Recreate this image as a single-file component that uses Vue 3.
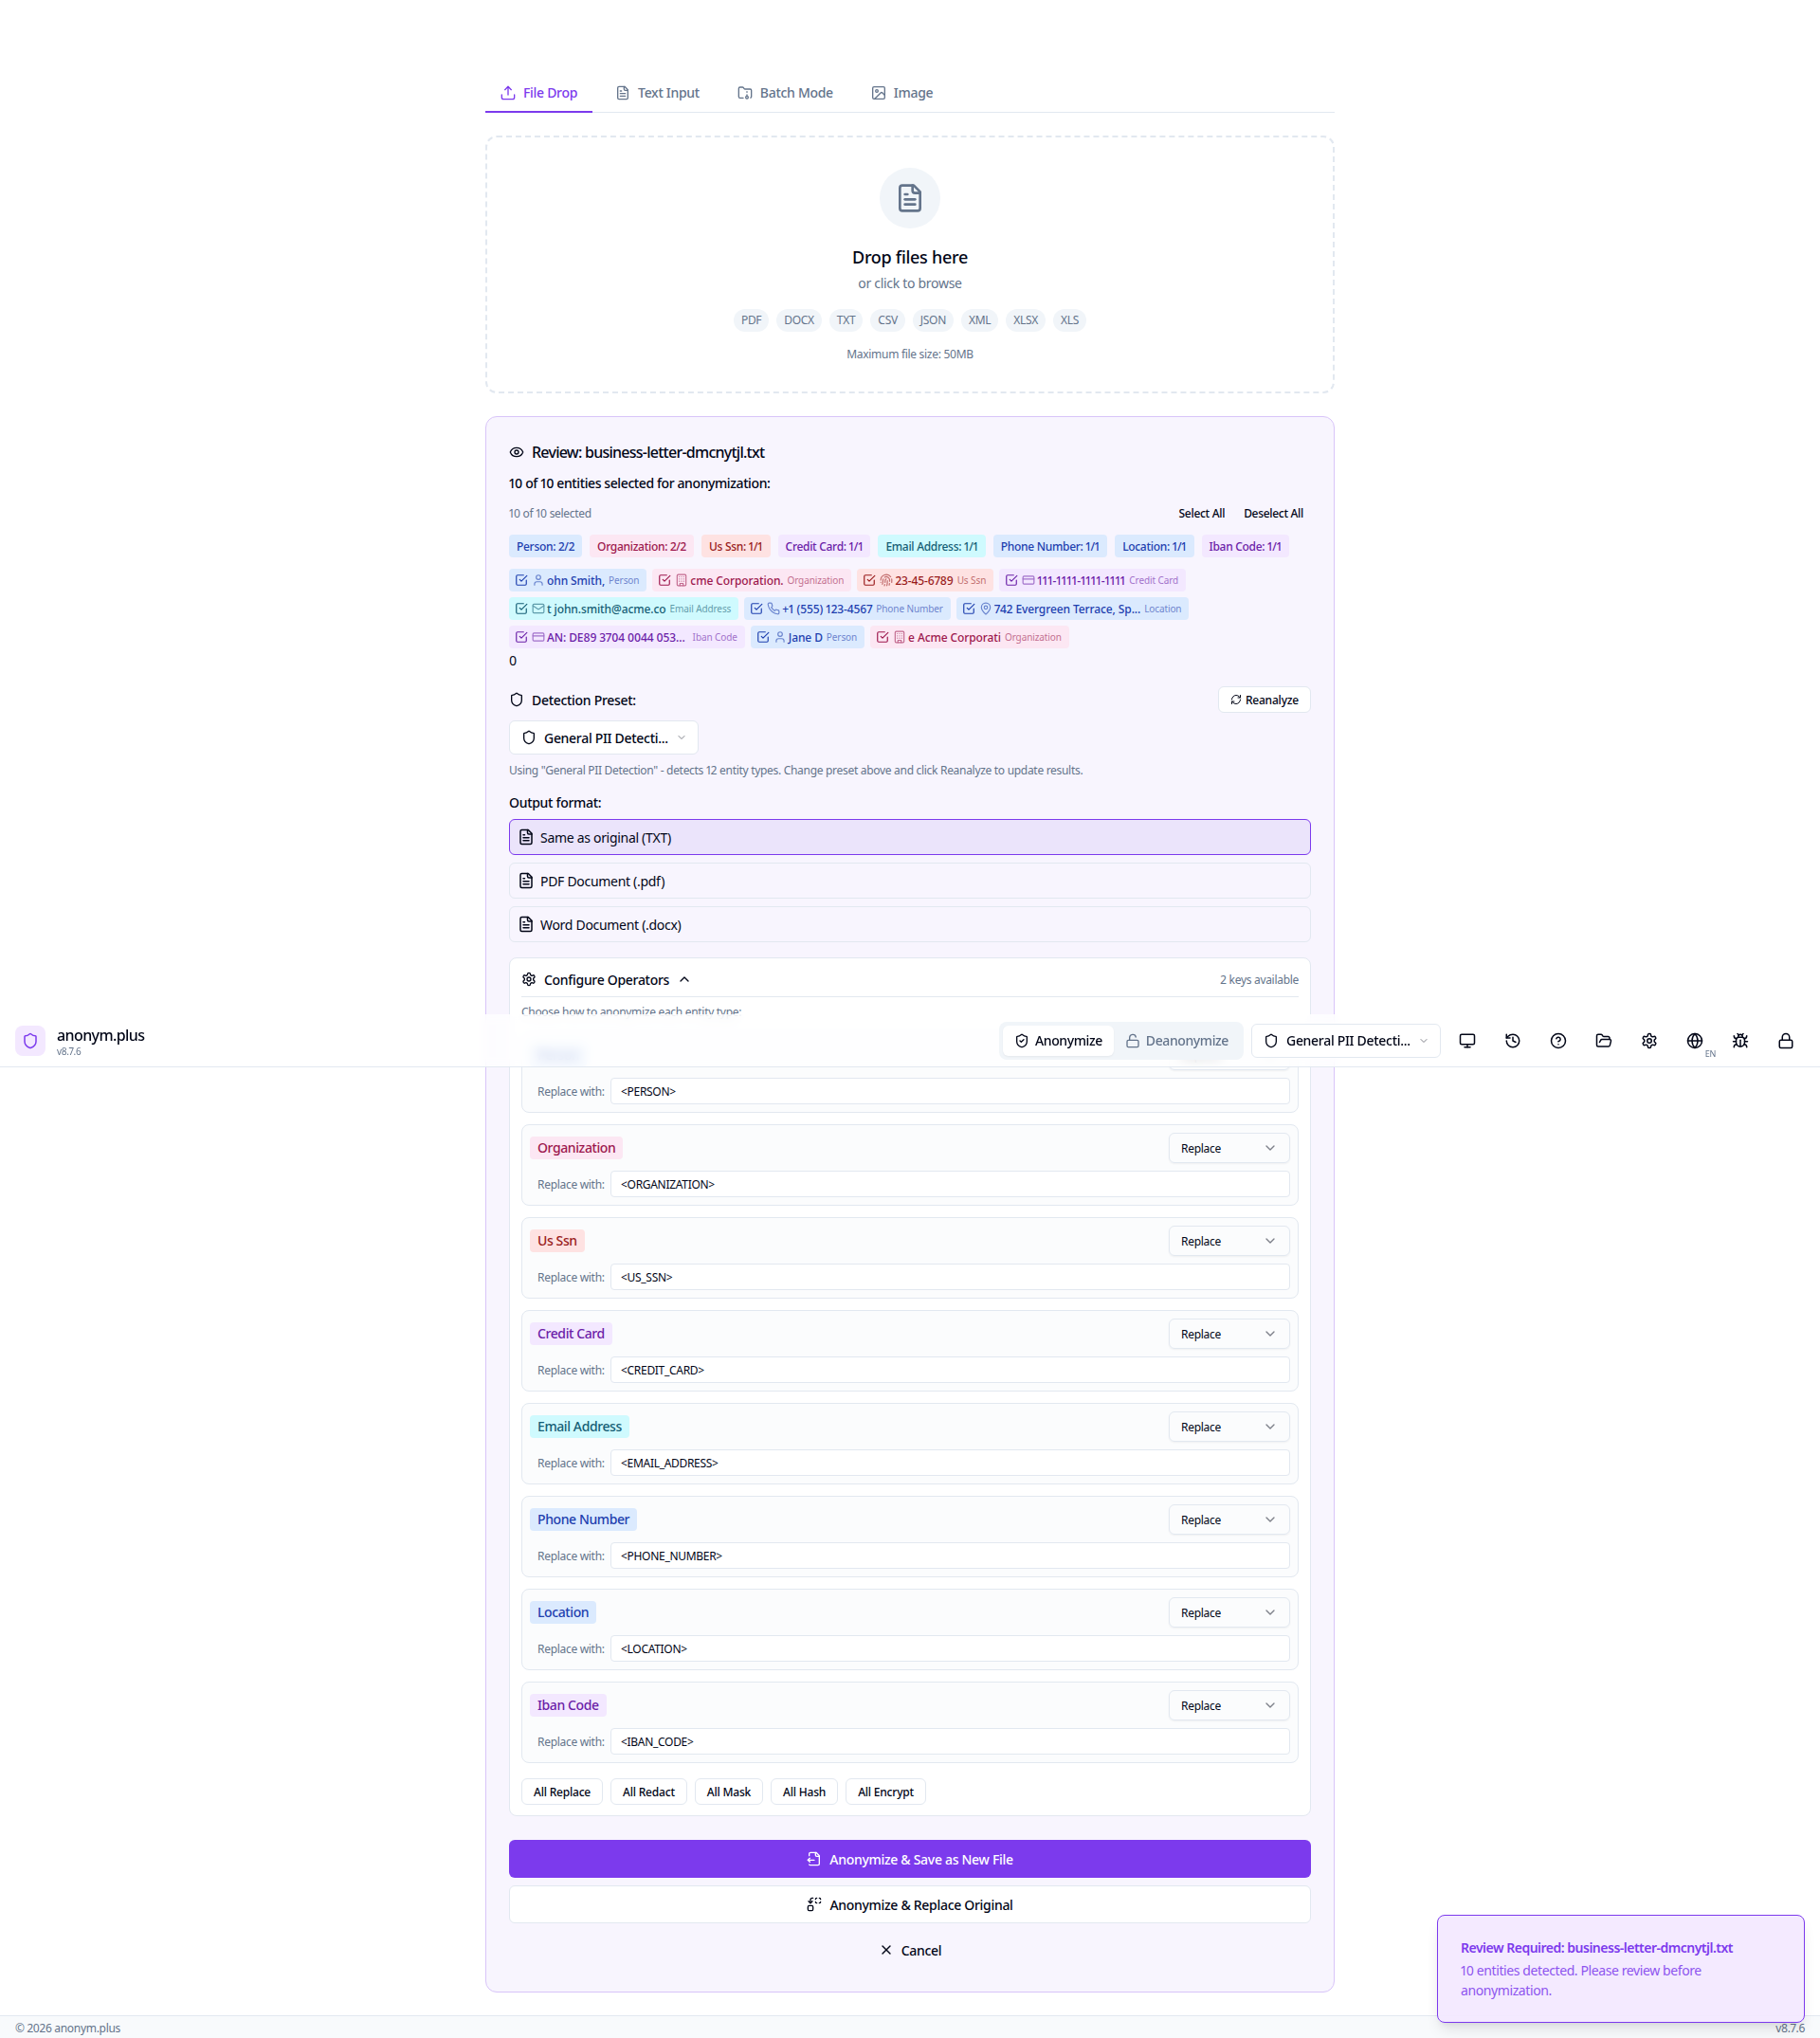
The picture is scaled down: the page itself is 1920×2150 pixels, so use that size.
<template>
  <div class="page">
    <main class="main">
      <!-- tabs -->
      <div class="tabs">
        <button v-for="t in tabs" :key="t.label" class="tab" :class="{ active: t.active }">
          <Icon :name="t.icon" :size="16" />
          {{ t.label }}
        </button>
      </div>

      <!-- drop zone -->
      <div class="dropzone">
        <div class="drop-circle"><Icon name="file" :size="32" /></div>
        <h3 class="drop-title">Drop files here</h3>
        <p class="drop-sub">or click to browse</p>
        <div class="formats">
          <span v-for="f in formats" :key="f" class="format">{{ f }}</span>
        </div>
        <p class="drop-max">Maximum file size: 50MB</p>
      </div>

      <!-- review panel -->
      <section class="review">
        <h2 class="review-title"><Icon name="eye" :size="16" />Review: business-letter-dmcnytjl.txt</h2>
        <p class="review-count">10 of 10 entities selected for anonymization:</p>
        <div class="select-row">
          <span class="muted-12">10 of 10 selected</span>
          <div class="select-actions">
            <button class="link-btn">Select All</button>
            <button class="link-btn">Deselect All</button>
          </div>
        </div>

        <div class="stats">
          <span v-for="s in stats" :key="s.label" class="stat" :class="s.color">{{ s.label }}</span>
        </div>

        <div class="entities">
          <span v-for="e in entities" :key="e.text" class="entity" :class="e.color">
            <Icon name="check" :size="14" class="entity-check" />
            <Icon :name="e.icon" :size="14" class="entity-icon" />
            <span class="entity-text">{{ e.text }}</span>
            <span class="entity-label" :class="{ wide: e.wide }">{{ e.label }}</span>
          </span>
        </div>
        <div class="zero">0</div>

        <div class="preset-row">
          <span class="label-14"><Icon name="shield" :size="16" />Detection Preset:</span>
          <button class="small-btn reanalyze"><Icon name="refresh" :size="12" />Reanalyze</button>
        </div>
        <button class="preset-select">
          <Icon name="shield" :size="16" />
          <span class="preset-text">General PII Detecti...</span>
          <Icon name="chevronDown" :size="12" class="chev-muted" />
        </button>
        <p class="preset-help">Using "General PII Detection" - detects 12 entity types. Change preset above and click Reanalyze to update results.</p>

        <p class="output-title">Output format:</p>
        <div class="outputs">
          <div v-for="o in outputs" :key="o.label" class="output" :class="{ active: o.active }">
            <Icon name="file" :size="18" />
            {{ o.label }}
          </div>
        </div>

        <!-- operators -->
        <div class="config">
          <div class="config-head">
            <span class="config-title"><Icon name="settings" :size="16" />Configure Operators<Icon name="chevronUp" :size="16" class="config-chev" /></span>
            <span class="muted-12">2 keys available</span>
          </div>
          <p class="config-help">Choose how to anonymize each entity type:</p>
          <div class="ops">
            <div v-for="op in operators" :key="op.name" class="op">
              <div class="op-top">
                <span class="op-badge" :class="op.color">{{ op.name }}</span>
                <button class="op-select">Replace<Icon name="chevronDown" :size="16" class="chev-muted" /></button>
              </div>
              <div class="op-bottom">
                <span class="op-label">Replace with:</span>
                <input class="op-input" :value="op.value" />
              </div>
            </div>
          </div>
          <div class="all-row">
            <button v-for="a in allActions" :key="a" class="small-btn">{{ a }}</button>
          </div>
        </div>

        <button class="action primary"><Icon name="fileOutput" :size="16" />Anonymize &amp; Save as New File</button>
        <button class="action outline"><Icon name="replace" :size="16" />Anonymize &amp; Replace Original</button>
        <button class="action ghost"><Icon name="x" :size="16" />Cancel</button>
      </section>
    </main>

    <footer class="footer">
      <span>© 2026 anonym.plus</span>
      <span>v8.7.6</span>
    </footer>

    <!-- sticky header, caught mid page by the capture -->
    <header class="header">
      <div class="brand">
        <div class="logo"><Icon name="shield" :size="18" /></div>
        <div>
          <div class="brand-name">anonym.plus</div>
          <div class="brand-version">v8.7.6</div>
        </div>
      </div>
      <div class="header-right">
        <div class="mode">
          <button class="mode-btn active"><Icon name="shieldCheck" :size="16" />Anonymize</button>
          <button class="mode-btn"><Icon name="lockOpen" :size="16" />Deanonymize</button>
        </div>
        <button class="preset-select head-preset">
          <Icon name="shield" :size="16" />
          <span class="preset-text">General PII Detecti...</span>
          <Icon name="chevronDown" :size="12" class="chev-muted" />
        </button>
        <div class="head-icons">
          <button v-for="i in headIcons" :key="i" class="head-icon">
            <Icon :name="i" :size="18" />
            <span v-if="i === 'globe'" class="lang">EN</span>
          </button>
        </div>
      </div>
    </header>

    <div class="toast">
      <div class="toast-title">Review Required: business-letter-dmcnytjl.txt</div>
      <div class="toast-text">10 entities detected. Please review before anonymization.</div>
    </div>
  </div>
</template>

<script setup>
import { h } from 'vue'

const icons = {
  upload: '<path d="M22 15v4a3 3 0 0 1-3 3H5a3 3 0 0 1-3-3v-4"/><polyline points="17 7 12 2 7 7"/><line x1="12" x2="12" y1="2" y2="15"/>',
  file: '<path d="M15 2H6a2 2 0 0 0-2 2v16a2 2 0 0 0 2 2h12a2 2 0 0 0 2-2V7Z"/><path d="M14 2v4a2 2 0 0 0 2 2h4"/><path d="M10 9H8"/><path d="M16 13H8"/><path d="M16 17H8"/>',
  folder: '<circle cx="15" cy="19" r="2"/><path d="M20.9 19.8A2 2 0 0 0 22 18V8a2 2 0 0 0-2-2h-7.9a2 2 0 0 1-1.69-.9L9.6 3.9A2 2 0 0 0 7.93 3H4a2 2 0 0 0-2 2v13a2 2 0 0 0 2 2h5.1"/><path d="M15 11v-1"/><path d="M15 17v-2"/>',
  image: '<rect width="19" height="19" x="2.5" y="2.5" rx="2"/><circle cx="9" cy="9" r="2"/><path d="m21 15-3.086-3.086a2 2 0 0 0-2.828 0L6 21"/>',
  eye: '<path d="M2.062 12.348a1 1 0 0 1 0-.696 10.75 10.75 0 0 1 19.876 0 1 1 0 0 1 0 .696 10.75 10.75 0 0 1-19.876 0"/><circle cx="12" cy="12" r="3"/>',
  shield: '<path d="M20 13c0 5-3.5 7.5-7.66 8.95a1 1 0 0 1-.67-.01C7.5 20.5 4 18 4 13V6a1 1 0 0 1 1-1c2 0 4.5-1.2 6.24-2.72a1.17 1.17 0 0 1 1.52 0C14.51 3.81 17 5 19 5a1 1 0 0 1 1 1z"/>',
  shieldCheck: '<path d="M20 13c0 5-3.5 7.5-7.66 8.95a1 1 0 0 1-.67-.01C7.5 20.5 4 18 4 13V6a1 1 0 0 1 1-1c2 0 4.5-1.2 6.24-2.72a1.17 1.17 0 0 1 1.52 0C14.51 3.81 17 5 19 5a1 1 0 0 1 1 1z"/><path d="m9 12 2 2 4-4"/>',
  check: '<polyline points="9 11 12 14 22 4"/><path d="M21 12v7a2 2 0 0 1-2 2H5a2 2 0 0 1-2-2V5a2 2 0 0 1 2-2h11"/>',
  user: '<path d="M19 21v-2a4 4 0 0 0-4-4H9a4 4 0 0 0-4 4v2"/><circle cx="12" cy="7" r="4"/>',
  building: '<rect width="16" height="20" x="4" y="2" rx="2" ry="2"/><path d="M9 22v-4h6v4"/><path d="M8 6h.01"/><path d="M16 6h.01"/><path d="M12 6h.01"/><path d="M12 10h.01"/><path d="M12 14h.01"/><path d="M16 10h.01"/><path d="M16 14h.01"/><path d="M8 10h.01"/><path d="M8 14h.01"/>',
  fingerprint: '<path d="M12 10a2 2 0 0 0-2 2c0 1.02-.1 2.51-.26 4"/><path d="M14 13.12c0 2.38 0 6.38-1 8.88"/><path d="M17.29 21.02c.12-.6.43-2.3.5-3.02"/><path d="M2 12a10 10 0 0 1 18-6"/><path d="M2 16h.01"/><path d="M21.8 16c.2-2 .131-5.354 0-6"/><path d="M5 19.5C5.5 18 6 15 6 12a6 6 0 0 1 .34-2"/><path d="M8.65 22c.21-.66.45-1.32.57-2"/><path d="M9 6.8a6 6 0 0 1 9 5.2v2"/>',
  card: '<rect width="20" height="14" x="2" y="5" rx="2"/><line x1="2" x2="22" y1="10" y2="10"/>',
  mail: '<rect width="20" height="16" x="2" y="4" rx="2"/><path d="m22 7-8.97 5.7a1.94 1.94 0 0 1-2.06 0L2 7"/>',
  phone: '<path d="M22 16.92v3a2 2 0 0 1-2.18 2 19.79 19.79 0 0 1-8.63-3.07 19.5 19.5 0 0 1-6-6 19.79 19.79 0 0 1-3.07-8.67A2 2 0 0 1 4.11 2h3a2 2 0 0 1 2 1.72 12.84 12.84 0 0 0 .7 2.81 2 2 0 0 1-.45 2.11L8.09 9.91a16 16 0 0 0 6 6l1.27-1.27a2 2 0 0 1 2.11-.45 12.84 12.84 0 0 0 2.81.7A2 2 0 0 1 22 16.92z"/>',
  pin: '<path d="M20 10c0 4.993-5.539 10.193-7.399 11.799a1 1 0 0 1-1.202 0C9.539 20.193 4 14.993 4 10a8 8 0 0 1 16 0"/><circle cx="12" cy="10" r="3"/>',
  refresh: '<path d="M3 12a9 9 0 0 1 9-9 9.75 9.75 0 0 1 6.74 2.74L21 8"/><path d="M21 3v5h-5"/><path d="M21 12a9 9 0 0 1-9 9 9.75 9.75 0 0 1-6.74-2.74L3 16"/><path d="M8 16H3v5"/>',
  chevronDown: '<path d="m6 9 6 6 6-6"/>',
  chevronUp: '<path d="m18 15-6-6-6 6"/>',
  settings: '<path d="M12.22 2h-.44a2 2 0 0 0-2 2v.18a2 2 0 0 1-1 1.73l-.43.25a2 2 0 0 1-2 0l-.15-.08a2 2 0 0 0-2.73.73l-.22.38a2 2 0 0 0 .73 2.73l.15.1a2 2 0 0 1 1 1.72v.51a2 2 0 0 1-1 1.74l-.15.09a2 2 0 0 0-.73 2.73l.22.38a2 2 0 0 0 2.73.73l.15-.08a2 2 0 0 1 2 0l.43.25a2 2 0 0 1 1 1.73V20a2 2 0 0 0 2 2h.44a2 2 0 0 0 2-2v-.18a2 2 0 0 1 1-1.73l.43-.25a2 2 0 0 1 2 0l.15.08a2 2 0 0 0 2.73-.73l.22-.39a2 2 0 0 0-.73-2.73l-.15-.08a2 2 0 0 1-1-1.74v-.5a2 2 0 0 1 1-1.74l.15-.09a2 2 0 0 0 .73-2.73l-.22-.38a2 2 0 0 0-2.73-.73l-.15.08a2 2 0 0 1-2 0l-.43-.25a2 2 0 0 1-1-1.73V4a2 2 0 0 0-2-2z"/><circle cx="12" cy="12" r="3"/>',
  lockOpen: '<rect width="18" height="11" x="3" y="11" rx="2" ry="2"/><path d="M7 11V7a5 5 0 0 1 9.9-1"/>',
  lock: '<rect width="18" height="11" x="3" y="11" rx="2" ry="2"/><path d="M7 11V7a5 5 0 0 1 10 0v4"/>',
  monitor: '<rect width="20" height="14" x="2" y="3" rx="2"/><line x1="8" x2="16" y1="21" y2="21"/><line x1="12" x2="12" y1="17" y2="21"/>',
  history: '<path d="M3 12a9 9 0 1 0 9-9 9.75 9.75 0 0 0-6.74 2.74L3 8"/><path d="M3 3v5h5"/><path d="M12 7v5l4 2"/>',
  help: '<circle cx="12" cy="12" r="10"/><path d="M9.09 9a3 3 0 0 1 5.83 1c0 2-3 3-3 3"/><path d="M12 17h.01"/>',
  folderOpen: '<path d="m6 14 1.5-2.9A2 2 0 0 1 9.24 10H20a2 2 0 0 1 1.94 2.5l-1.54 6a2 2 0 0 1-1.95 1.5H4a2 2 0 0 1-2-2V5a2 2 0 0 1 2-2h3.9a2 2 0 0 1 1.69.9l.81 1.2a2 2 0 0 0 1.67.9H18a2 2 0 0 1 2 2v2"/>',
  globe: '<circle cx="12" cy="12" r="10"/><path d="M12 2a14.5 14.5 0 0 0 0 20 14.5 14.5 0 0 0 0-20"/><path d="M2 12h20"/>',
  bug: '<path d="m8 2 1.88 1.88"/><path d="M14.12 3.88 16 2"/><path d="M9 7.13v-1a3.003 3.003 0 1 1 6 0v1"/><path d="M12 20c-3.3 0-6-2.7-6-6v-3a4 4 0 0 1 4-4h4a4 4 0 0 1 4 4v3c0 3.3-2.7 6-6 6"/><path d="M12 20v-9"/><path d="M6.53 9C4.6 8.8 3 7.1 3 5"/><path d="M6 13H2"/><path d="M3 21c0-2.1 1.7-3.9 3.8-4"/><path d="M20.97 5c0 2.1-1.6 3.8-3.5 4"/><path d="M22 13h-4"/><path d="M17.2 17c2.1.1 3.8 1.9 3.8 4"/>',
  fileOutput: '<path d="M14 2v4a2 2 0 0 0 2 2h4"/><path d="M4 7V4a2 2 0 0 1 2-2h9l5 5v13a2 2 0 0 1-2 2H6a2 2 0 0 1-2-1"/><path d="m5 11-3 3"/><path d="m5 17-3-3h10"/>',
  replace: '<path d="M14 4a2 2 0 0 1 2-2"/><path d="M16 10a2 2 0 0 1-2-2"/><path d="M20 2a2 2 0 0 1 2 2"/><path d="M22 8a2 2 0 0 1-2 2"/><path d="m3 7 3 3 3-3"/><path d="M6 10V5a3 3 0 0 1 3-3h1"/><rect x="2" y="14" width="8" height="8" rx="2"/>',
  x: '<path d="M18 6 6 18"/><path d="m6 6 12 12"/>'
}

// lucide style icon
const Icon = (props) =>
  h('svg', {
    xmlns: 'http://www.w3.org/2000/svg',
    width: props.size,
    height: props.size,
    viewBox: '0 0 24 24',
    fill: 'none',
    stroke: 'currentColor',
    'stroke-width': 2,
    'stroke-linecap': 'round',
    'stroke-linejoin': 'round',
    innerHTML: icons[props.name]
  })
Icon.props = ['name', 'size']

const tabs = [
  { label: 'File Drop', icon: 'upload', active: true },
  { label: 'Text Input', icon: 'file' },
  { label: 'Batch Mode', icon: 'folder' },
  { label: 'Image', icon: 'image' }
]

const formats = ['PDF', 'DOCX', 'TXT', 'CSV', 'JSON', 'XML', 'XLSX', 'XLS']

const stats = [
  { label: 'Person: 2/2', color: 'blue' },
  { label: 'Organization: 2/2', color: 'pink' },
  { label: 'Us Ssn: 1/1', color: 'red' },
  { label: 'Credit Card: 1/1', color: 'purple' },
  { label: 'Email Address: 1/1', color: 'cyan' },
  { label: 'Phone Number: 1/1', color: 'blue' },
  { label: 'Location: 1/1', color: 'blue' },
  { label: 'Iban Code: 1/1', color: 'purple' }
]

const entities = [
  { text: 'ohn Smith,', label: 'Person', icon: 'user', color: 'blue' },
  { text: 'cme Corporation.', label: 'Organization', icon: 'building', color: 'pink' },
  { text: '23-45-6789', label: 'Us Ssn', icon: 'fingerprint', color: 'red' },
  { text: '111-1111-1111-1111', label: 'Credit Card', icon: 'card', color: 'purple' },
  { text: 't john.smith@acme.co', label: 'Email Address', icon: 'mail', color: 'cyan' },
  { text: '+1 (555) 123-4567', label: 'Phone Number', icon: 'phone', color: 'blue' },
  { text: '742 Evergreen Terrace, Sp...', label: 'Location', icon: 'pin', color: 'blue' },
  { text: 'AN: DE89 3704 0044 053...', label: 'Iban Code', icon: 'card', color: 'purple', wide: true },
  { text: 'Jane D', label: 'Person', icon: 'user', color: 'blue' },
  { text: 'e Acme Corporati', label: 'Organization', icon: 'building', color: 'pink' }
]

const outputs = [
  { label: 'Same as original (TXT)', active: true },
  { label: 'PDF Document (.pdf)' },
  { label: 'Word Document (.docx)' }
]

const operators = [
  { name: 'Person', value: '<PERSON>', color: 'blue' },
  { name: 'Organization', value: '<ORGANIZATION>', color: 'pink' },
  { name: 'Us Ssn', value: '<US_SSN>', color: 'red' },
  { name: 'Credit Card', value: '<CREDIT_CARD>', color: 'purple' },
  { name: 'Email Address', value: '<EMAIL_ADDRESS>', color: 'cyan' },
  { name: 'Phone Number', value: '<PHONE_NUMBER>', color: 'blue' },
  { name: 'Location', value: '<LOCATION>', color: 'blue' },
  { name: 'Iban Code', value: '<IBAN_CODE>', color: 'purple' }
]

const allActions = ['All Replace', 'All Redact', 'All Mask', 'All Hash', 'All Encrypt']

const headIcons = ['monitor', 'history', 'help', 'folderOpen', 'settings', 'globe', 'bug', 'lock']
</script>

<style>
html,
body {
  margin: 0;
  background: #ffffff;
}
</style>

<style scoped>
* {
  box-sizing: border-box;
}

.page {
  position: relative;
  width: 1920px;
  height: 2150px;
  overflow: hidden;
  display: flex;
  flex-direction: column;
  font-family: "Noto Sans", "Open Sans", sans-serif;
  font-variant-numeric: proportional-nums;
  color: #020617;
  background: #ffffff;
  letter-spacing: -0.3px;
}

button,
input {
  font-family: inherit;
  font-variant-numeric: inherit;
  letter-spacing: inherit;
  color: inherit;
}

p,
h2,
h3 {
  margin: 0;
}

svg {
  flex-shrink: 0;
}

.main {
  width: 896px;
  margin: 0 auto;
  padding-top: 74px;
  flex: 1;
}

/* tabs */
.tabs {
  display: flex;
  gap: 8px;
  border-bottom: 1px solid #e2e8f0;
  height: 45px;
}

.tab {
  display: flex;
  align-items: center;
  gap: 8px;
  height: 45px;
  padding: 4px 16px 0;
  border: none;
  border-bottom: 2px solid transparent;
  background: none;
  font-size: 14px;
  font-weight: 500;
  color: #64748b;
}

.tab.active {
  color: #7c3aed;
  border-bottom-color: #7c3aed;
}

/* drop zone */
.dropzone {
  margin-top: 24px;
  height: 272px;
  border: 2px dashed #e2e8f0;
  border-radius: 12px;
  padding-top: 32px;
  display: flex;
  flex-direction: column;
  align-items: center;
}

.drop-circle {
  width: 64px;
  height: 64px;
  border-radius: 50%;
  background: #f1f5f9;
  color: #64748b;
  display: flex;
  align-items: center;
  justify-content: center;
}

.drop-title {
  margin-top: 16px;
  font-size: 18px;
  line-height: 28px;
  font-weight: 500;
}

.drop-sub {
  margin-top: 4px;
  font-size: 14px;
  line-height: 20px;
  color: #64748b;
}

.formats {
  margin-top: 17px;
  display: flex;
  gap: 8px;
}

.format {
  height: 24px;
  line-height: 24px;
  padding: 0 8px;
  border-radius: 12px;
  background: #f1f5f9;
  font-size: 12px;
  color: #64748b;
}

.drop-max {
  margin-top: 16px;
  font-size: 12px;
  line-height: 16px;
  color: #64748b;
}

/* review panel */
.review {
  margin-top: 24px;
  height: 1663px;
  padding: 25px 24px 24px;
  border: 1px solid #d8c4f9;
  border-radius: 12px;
  background: #f8f5fe;
}

.review-title {
  display: flex;
  align-items: center;
  gap: 8px;
  font-size: 16px;
  line-height: 24px;
  font-weight: 500;
  letter-spacing: -0.75px;
}

.review-count {
  margin-top: 11px;
  font-size: 14px;
  line-height: 20px;
  font-weight: 500;
  letter-spacing: -0.4px;
}

.select-row {
  margin-top: 7px;
  height: 28px;
  display: flex;
  align-items: center;
  justify-content: space-between;
}

.select-actions {
  display: flex;
  gap: 4px;
}

.link-btn {
  border: none;
  background: none;
  padding: 0 8px;
  height: 28px;
  font-size: 12px;
  font-weight: 500;
}

.muted-12 {
  font-size: 12px;
  color: #64748b;
}

.stats {
  margin-top: 9px;
  display: flex;
  flex-wrap: wrap;
  gap: 8px;
}

.stat {
  height: 24px;
  line-height: 22px;
  padding: 2px 8px 0;
  border-radius: 4px;
  font-size: 12px;
  font-weight: 500;
  white-space: nowrap;
}

.blue { background: #dbeafe; color: #1e40af; }
.pink { background: #fce7f3; color: #9d174d; }
.red { background: #fee2e2; color: #991b1b; }
.purple { background: #f3e8ff; color: #6b21a8; }
.cyan { background: #cffafe; color: #155e75; }

.entities {
  margin-top: 12px;
  display: flex;
  flex-wrap: wrap;
  gap: 6px;
}

.entity {
  display: flex;
  align-items: center;
  height: 24px;
  padding: 0 8px 0 6px;
  border-radius: 4px;
  font-size: 12px;
  font-weight: 500;
  letter-spacing: -0.1px;
}

.entity-check {
  margin-right: 4px;
}

.entity-icon {
  margin-right: 2px;
  opacity: 0.6;
}

.entity-label {
  margin-left: 4px;
  font-size: 10px;
  font-weight: 400;
  opacity: 0.6;
}

.entity-label.wide {
  margin-left: 8px;
}

.zero {
  margin-top: 3px;
  font-size: 14px;
  line-height: 20px;
}

.preset-row {
  margin-top: 17px;
  height: 28px;
  display: flex;
  align-items: center;
  justify-content: space-between;
}

.label-14 {
  display: flex;
  align-items: center;
  gap: 8px;
  font-size: 14px;
  font-weight: 500;
}

.small-btn {
  height: 28px;
  padding: 0 12px;
  border: 1px solid #e2e8f0;
  border-radius: 6px;
  background: #ffffff;
  font-size: 12px;
  font-weight: 500;
  letter-spacing: -0.2px;
  display: flex;
  align-items: center;
}

.reanalyze {
  gap: 4px;
}

.preset-select {
  margin-top: 8px;
  width: 200px;
  height: 36px;
  padding: 0 12px;
  border: 1px solid #e2e8f0;
  border-radius: 6px;
  background: #ffffff;
  display: flex;
  align-items: center;
  gap: 8px;
  font-size: 14px;
  font-weight: 500;
}

.preset-text {
  flex: 1;
  text-align: left;
  white-space: nowrap;
}

.chev-muted {
  opacity: 0.5;
}

.preset-help {
  margin-top: 9px;
  font-size: 12px;
  line-height: 16px;
  color: #64748b;
}

.output-title {
  margin-top: 16px;
  font-size: 14px;
  line-height: 20px;
  font-weight: 500;
}

.outputs {
  margin-top: 7px;
  display: flex;
  flex-direction: column;
  gap: 8px;
}

.output {
  height: 38px;
  padding: 0 8px;
  border: 1px solid #e2e8f0;
  border-radius: 6px;
  display: flex;
  align-items: center;
  gap: 6px;
  font-size: 14px;
}

.output.active {
  background: #ebe4fb;
  border-color: #7c3aed;
}

/* operators */
.config {
  margin-top: 16px;
  height: 906px;
  padding: 0 12px;
  border: 1px solid #e2e8f0;
  border-radius: 8px;
  background: #ffffff;
}

.config-head {
  height: 41px;
  padding-top: 4px;
  border-bottom: 1px solid #e2e8f0;
  display: flex;
  align-items: center;
  justify-content: space-between;
}

.config-title {
  display: flex;
  align-items: center;
  gap: 8px;
  font-size: 14px;
  font-weight: 500;
}

.config-help {
  margin-top: 8px;
  font-size: 12px;
  line-height: 16px;
  color: #64748b;
}

.ops {
  margin-top: 12px;
  display: flex;
  flex-direction: column;
  gap: 12px;
}

.op {
  height: 86px;
  padding: 8px;
  border: 1px solid #e2e8f0;
  border-radius: 8px;
  background: #f8fafc80;
}

.op-top {
  display: flex;
  align-items: center;
  justify-content: space-between;
  height: 32px;
}

.op-badge {
  height: 24px;
  line-height: 24px;
  padding: 0 8px;
  border-radius: 4px;
  font-size: 14px;
  font-weight: 500;
  letter-spacing: -0.4px;
}

.op-select {
  width: 128px;
  height: 32px;
  padding: 0 12px;
  border: 1px solid #e2e8f0;
  border-radius: 6px;
  background: transparent;
  font-size: 12px;
  display: flex;
  align-items: center;
  justify-content: space-between;
  box-shadow: 0 1px 2px rgba(0, 0, 0, 0.05);
}

.op-bottom {
  margin-top: 8px;
  padding-left: 8px;
  display: flex;
  align-items: center;
  gap: 6px;
}

.op-label {
  width: 71px;
  font-size: 12px;
  color: #64748b;
  white-space: nowrap;
}

.op-input {
  flex: 1;
  height: 28px;
  padding: 0 10px;
  border: 1px solid #e2e8f0;
  border-radius: 4px;
  background: #ffffff;
  font-size: 12px;
  outline: none;
}

.all-row {
  margin-top: 16px;
  display: flex;
  gap: 8px;
}

/* bottom actions */
.action {
  width: 100%;
  height: 40px;
  margin-top: 8px;
  border: 1px solid transparent;
  border-radius: 6px;
  display: flex;
  align-items: center;
  justify-content: center;
  gap: 8px;
  font-size: 14px;
  font-weight: 500;
  background: none;
}

.primary {
  margin-top: 25px;
  background: #7c3aed;
  color: #ffffff;
}

.outline {
  background: #ffffff;
  border-color: #e2e8f0;
}

/* footer */
.footer {
  height: 24px;
  padding: 4px 16px 0;
  border-top: 1px solid #e2e8f0;
  background: #f8fafc;
  display: flex;
  justify-content: space-between;
  font-size: 12px;
  line-height: 18px;
  color: #64748b;
}

/* header */
.header {
  position: absolute;
  top: 1070px;
  left: 0;
  right: 0;
  height: 56px;
  padding: 0 16px;
  border-bottom: 1px solid #e2e8f0;
  background: rgba(255, 255, 255, 0.75);
  backdrop-filter: blur(6px);
  display: flex;
  align-items: center;
  justify-content: space-between;
}

.brand {
  display: flex;
  align-items: center;
  gap: 12px;
}

.logo {
  width: 32px;
  height: 32px;
  border-radius: 8px;
  background: #f3e8ff;
  color: #7c3aed;
  display: flex;
  align-items: center;
  justify-content: center;
}

.brand-name {
  font-size: 16px;
  line-height: 22px;
  font-weight: 500;
  letter-spacing: -0.6px;
}

.brand-version {
  font-size: 10px;
  line-height: 12px;
  color: #64748b;
}

.header-right {
  display: flex;
  align-items: center;
  gap: 8px;
}

.mode {
  height: 40px;
  padding: 4px;
  border-radius: 8px;
  background: #f1f5f9;
  display: flex;
}

.mode-btn {
  height: 32px;
  padding: 0 12px;
  border: none;
  border-radius: 6px;
  background: none;
  display: flex;
  align-items: center;
  gap: 6px;
  font-size: 14px;
  font-weight: 500;
  letter-spacing: -0.4px;
  color: #64748b;
}

.mode-btn.active {
  background: #ffffff;
  color: #020617;
  box-shadow: 0 1px 2px rgba(0, 0, 0, 0.05);
}

.head-preset {
  margin-top: 0;
}

.head-icons {
  display: flex;
  gap: 8px;
}

.head-icon {
  position: relative;
  width: 40px;
  height: 40px;
  border: none;
  background: none;
  padding: 0;
  display: flex;
  align-items: center;
  justify-content: center;
}

.lang {
  position: absolute;
  right: -2px;
  bottom: 0;
  font-size: 9px;
  line-height: 12px;
  color: #64748b;
}

/* toast */
.toast {
  position: absolute;
  right: 16px;
  bottom: 16px;
  width: 388px;
  height: 114px;
  padding: 24px;
  border: 1px solid #7c3aed;
  border-radius: 8px;
  background: rgba(243, 232, 255, 0.92);
  box-shadow: 0 10px 15px -3px rgba(0, 0, 0, 0.1), 0 4px 6px -4px rgba(0, 0, 0, 0.1);
  color: #7c3aed;
  font-size: 14px;
}

.toast-title {
  font-weight: 600;
  line-height: 20px;
  letter-spacing: -0.5px;
}

.toast-text {
  margin-top: 3px;
  line-height: 21px;
  letter-spacing: -0.4px;
  opacity: 0.85;
}
</style>
